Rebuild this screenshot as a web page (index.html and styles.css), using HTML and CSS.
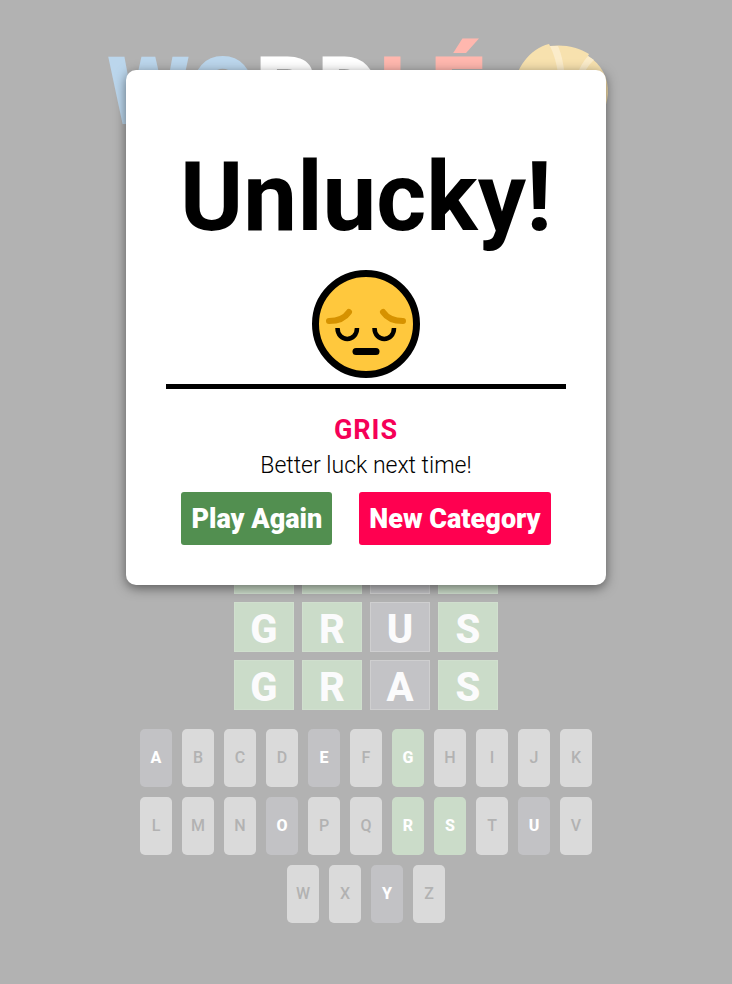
FILE: index.html
```html
<!DOCTYPE html>
<html lang="en">
<head>
<meta charset="utf-8">
<title>Wordlé</title>
<meta name="viewport" content="width=device-width, initial-scale=1">
<link rel="stylesheet" href="styles.css">
</head>
<body>
<div class="game">
  <header class="brand">
    <h1 class="logo"><span class="blue">WO</span><span class="white">RD</span><span class="red">LÉ</span></h1>
    <svg class="ball" viewBox="0 0 96 96" aria-hidden="true">
      <path fill="#f7e1ae" d="M0 46C3 24 16 5 36 0L37 2C50 0 66 3 76 10L75 12C88 20 96 34 95 50C92 78 73 94 47 94C20 94 2 74 0 46Z"/>
      <path fill="#fbecca" d="M37 2L45 2C50 14 53 28 52 60L46 60C47 38 45 18 37 2ZM75 12L81 16C73 23 66 36 62 60L56 58C60 38 66 22 75 12Z"/>
    </svg>
  </header>
  <main>
    <div class="board">
      <i class="tile"></i><i class="tile"></i><i class="tile"></i><i class="tile"></i>
      <i class="tile"></i><i class="tile"></i><i class="tile"></i><i class="tile"></i>
      <i class="tile"></i><i class="tile"></i><i class="tile"></i><i class="tile"></i>
      <i class="tile"></i><i class="tile"></i><i class="tile"></i><i class="tile"></i>
      <i class="tile"></i><i class="tile"></i><i class="tile"></i><i class="tile"></i>
      <i class="tile hit"></i><i class="tile hit"></i><i class="tile"></i><i class="tile hit"></i>
      <span class="tile hit">G</span><span class="tile hit">R</span><span class="tile">U</span><span class="tile hit">S</span>
      <span class="tile hit">G</span><span class="tile hit">R</span><span class="tile">A</span><span class="tile hit">S</span>
    </div>
    <div class="keyboard">
      <button class="key miss">A</button><button class="key">B</button><button class="key">C</button><button class="key">D</button><button class="key miss">E</button><button class="key">F</button><button class="key hit">G</button><button class="key">H</button><button class="key">I</button><button class="key">J</button><button class="key">K</button>
      <button class="key">L</button><button class="key">M</button><button class="key">N</button><button class="key miss">O</button><button class="key">P</button><button class="key">Q</button><button class="key hit">R</button><button class="key hit">S</button><button class="key">T</button><button class="key miss">U</button><button class="key">V</button>
      <button class="key">W</button><button class="key">X</button><button class="key miss">Y</button><button class="key">Z</button>
    </div>
  </main>
</div>
<div class="overlay">
  <section class="modal" role="dialog" aria-labelledby="result">
    <h2 class="result" id="result">Unlucky!</h2>
    <div class="mood">
      <svg class="face" viewBox="0 0 108 108" role="img" aria-label="Sad face">
        <circle cx="54" cy="54" r="50.5" fill="#ffc83d" stroke="#000" stroke-width="7"/>
        <g fill="none" stroke-linecap="round" stroke-width="6">
          <path stroke="#d69200" d="M17 51C25 51 33 48 37 42M71 42C75 48 83 51 91 51"/>
          <path stroke="#000" stroke-width="4.5" stroke-linecap="butt" d="M25.5 58C25.5 72.5 45 72.5 45 58M62.5 58C62.5 72.5 82 72.5 82 58"/>
          <path stroke="#000" stroke-width="7" d="M44 81.5H64"/>
        </g>
      </svg>
    </div>
    <p class="answer">GRIS</p>
    <p class="message">Better luck next time!</p>
    <div class="actions">
      <button class="action again">Play Again</button>
      <button class="action category">New Category</button>
    </div>
  </section>
</div>
</body>
</html>
```
FILE: styles.css
```css
* { box-sizing: border-box; }

body {
  margin: 0;
  min-height: 100vh;
  background: #b2b2b2;
  font-family: Roboto, "Liberation Sans", sans-serif;
  color: #000;
}

h1, h2, p { margin: 0; }

button { border: 0; padding: 0; font-family: inherit; cursor: pointer; }

.game { padding: 36px 0 60px; }

.brand {
  display: flex;
  justify-content: center;
  gap: 29px;
  padding-right: 16px;
}

.logo {
  font-size: 95px;
  line-height: 112px;
  font-weight: 900;
}

.blue { color: #bbd6ec; }
.white { color: #fff; }
.red { color: #ffb7ae; }

.ball { width: 96px; height: 96px; margin-top: 8px; }

.board {
  display: grid;
  grid-template-columns: repeat(4, 60px);
  grid-auto-rows: 50px;
  gap: 8px;
  justify-content: center;
  margin-top: 106px;
}

.tile {
  display: flex;
  align-items: center;
  justify-content: center;
  padding-top: 6px;
  border: 1px solid #cfcfd0;
  background: #c3c3c6;
  color: #fbfbfc;
  font-size: 40px;
  line-height: 48px;
  font-weight: 800;
}

.tile.hit { background: #cbdcc9; border-color: #d0dfce; }

.keyboard {
  display: flex;
  flex-wrap: wrap;
  justify-content: center;
  gap: 10px;
  max-width: 460px;
  margin: 19px auto 0;
}

.key {
  width: 32px;
  height: 58px;
  padding-bottom: 2px;
  border-radius: 5px;
  background: #dadada;
  color: #b2b2b2;
  font-size: 16px;
  font-weight: 500;
}

.key.miss { background: #c2c2c5; color: #fff; font-weight: 800; }
.key.hit { background: #cbdcc9; color: #fff; font-weight: 800; }

.overlay {
  position: absolute;
  top: 70px;
  left: 0;
  right: 0;
  display: flex;
  justify-content: center;
}

.modal {
  width: 480px;
  max-width: 100%;
  padding: 71px 40px 40px;
  border-radius: 10px;
  background: #fff;
  box-shadow: 0 3px 12px rgba(0, 0, 0, 0.5);
  text-align: center;
}

.result {
  font-size: 96px;
  line-height: 112px;
  font-weight: 700;
}

.mood {
  display: flex;
  justify-content: center;
  padding: 17px 0 6px;
  border-bottom: 5px solid #000;
}

.face { width: 108px; height: 108px; }

.answer {
  margin-top: 24px;
  color: #f50057;
  font-size: 27px;
  line-height: 34px;
  font-weight: 700;
  letter-spacing: 1px;
}

.message {
  margin-top: 1px;
  font-size: 23px;
  line-height: 36px;
  font-weight: 300;
}

.actions {
  display: flex;
  justify-content: center;
  gap: 27px;
  margin-top: 8px;
}

.action {
  height: 53px;
  padding: 0 10px;
  border-radius: 3px;
  color: #fff;
  font-size: 27px;
  font-weight: 900;
}

.again { background: #528f50; }
.category { background: #ff0050; }
```
